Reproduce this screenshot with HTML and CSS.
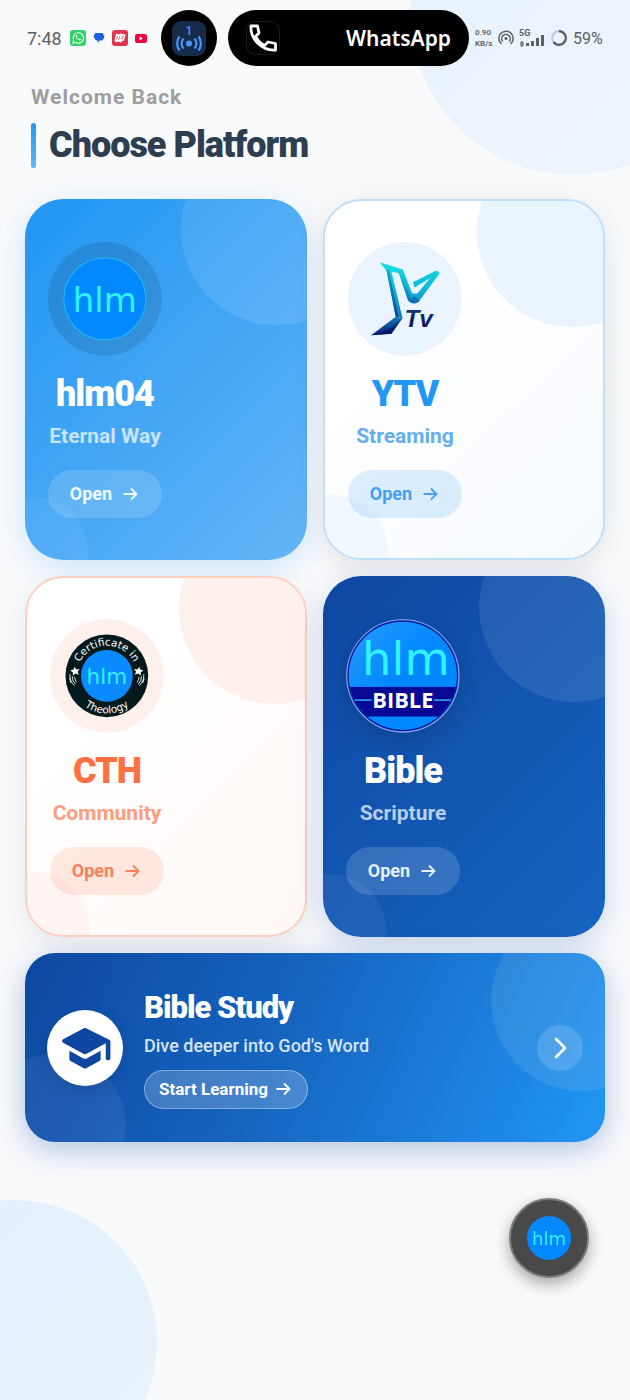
FILE: index.html
```html
<!DOCTYPE html>
<html lang="en">
<head>
    <meta charset="UTF-8">
    <meta name="viewport" content="width=device-width, initial-scale=1.0">
    <title>Choose Platform</title>
    <link rel="stylesheet" href="styles.css">
</head>
<body>
    <!-- shared icons -->
    <svg class="defs" width="0" height="0" aria-hidden="true">
        <symbol id="arrow" viewBox="0 0 20 20">
            <path d="M3.500 10h13M11 4.500l5.500 5.500-5.500 5.500" fill="none" stroke="currentColor" stroke-width="1.800"/>
        </symbol>
    </svg>

    <div class="page">
        <div class="status-bar">
            <span class="time">7:48</span>
            <div class="notifications">
                <svg width="16" height="16" viewBox="0 0 16 16">
                    <rect width="16" height="16" rx="3" fill="#2fd366"/>
                    <path d="M3 13l.8-2.600A5.200 5.200 0 1 1 5.700 12.400z" fill="none" stroke="#fff" stroke-width="1.100"/>
                    <path d="M6 5.200c-.6.600-.3 2 1.200 3.500s3 1.900 3.500 1.200l.2-.9-1.400-.7-.6.600c-.9-.3-1.600-1-1.900-1.900l.5-.6-.7-1.400z" fill="#fff"/>
                </svg>
                <svg width="12" height="12" viewBox="0 0 12 12">
                    <path d="M3 1h6q1.500 0 1.500 2 1.500 0 .8 1.500Q10.500 8.500 8 8.500H6.500L4.500 11V8.500Q2 8.500 1.500 6 0 5 1 3.500 1.500 1 3 1z" fill="#1a5fe0"/>
                </svg>
                <svg width="16" height="16" viewBox="0 0 16 16">
                    <rect width="16" height="16" rx="3" fill="#e1344d"/>
                    <path d="M4 3.500l3.500 1 1-1 5 1-1.500 6-2 .5-1 1.500-3-1-1.500 1L2.500 11z" fill="#fff"/>
                    <path d="M5.500 6L4.500 9.500M8 6L6.500 10M10 6h1.500L10.500 8.500H9" fill="none" stroke="#e1344d" stroke-width=".7"/>
                </svg>
                <svg width="12" height="9" viewBox="0 0 12 9">
                    <rect width="12" height="9" rx="2" fill="#f5003d"/>
                    <path d="M4.500 2.500v4l3.500-2z" fill="#fff"/>
                </svg>
            </div>
            <div class="hotspot">
                <svg width="34" height="35" viewBox="0 0 34 35">
                    <rect width="34" height="35" rx="9" fill="#162c4a"/>
                    <text x="17" y="14" class="hotspot-count">1</text>
                    <circle cx="17" cy="22.500" r="3" fill="#4c94f8"/>
                    <path d="M11.500 17.500a7.500 7.500 0 0 0 0 10M22.500 17.500a7.500 7.500 0 0 1 0 10M7.500 15.500a11.500 11.500 0 0 0 0 14M26.500 15.500a11.500 11.500 0 0 1 0 14" fill="none" stroke="#4c94f8" stroke-width="2.200"/>
                </svg>
            </div>
            <div class="call-pill">
                <svg width="34" height="34" viewBox="0 0 34 34">
                    <rect x=".5" y=".5" width="33" height="33" rx="9" fill="#000" stroke="#1c1c1c"/>
                    <path d="M5 5h6.500l1.500 7-3.500 3.500c2 4 4.800 6.800 9 9L22 21l7.500 1.500V29C16 30 4 18 5 5z" fill="none" stroke="#fff" stroke-width="2.800" stroke-linejoin="round"/>
                </svg>
                <span>WhatsApp</span>
            </div>
            <div class="signals">
                <span class="speed">0.90<br>KB/s</span>
                <svg width="16" height="16" viewBox="0 0 16 16">
                    <g fill="none" stroke="#5c6065" stroke-width="1.500">
                        <path d="M3.500 14A7.200 7.200 0 1 1 12.500 14"/>
                        <path d="M4.700 11.500a4.300 4.300 0 1 1 6.600 0"/>
                    </g>
                    <circle cx="8" cy="8.500" r="1.600" fill="#5c6065"/>
                </svg>
                <svg class="bars" width="26" height="18" viewBox="0 0 26 18">
                    <text x="0" y="7">5G</text>
                    <path d="M7 14h3v3H7zM12 12h3v5h-3zM17 9h3v8h-3zM22 6h3v11h-3z" fill="#5c6065"/>
                    <rect x="2" y="13" width="2" height="4" rx="1" fill="none" stroke="#5c6065" stroke-width="1.300"/>
                </svg>
                <svg width="18" height="18" viewBox="0 0 18 18">
                    <circle cx="9" cy="9" r="6.800" fill="none" stroke="#c3c9cf" stroke-width="2.200"/>
                    <path d="M9 2.200a6.800 6.800 0 1 1-5.500 10.800" fill="none" stroke="#5c6065" stroke-width="2.200"/>
                </svg>
                <span class="battery">59%</span>
            </div>
        </div>

        <header>
            <p class="welcome">Welcome Back</p>
            <h1>Choose Platform</h1>
        </header>

        <main class="platforms">
            <section class="card card-hlm">
                <svg class="logo" viewBox="0 0 339 339" role="img" aria-label="hlm04 logo">
                    <circle cx="169" cy="169" r="169" fill="#000" opacity=".11"/>
                    <circle cx="169" cy="169" r="122" fill="#0389ff" stroke="#22b8f5" stroke-width="3"/>
                    <text x="169" y="207" font-size="101" class="mark">hlm</text>
                </svg>
                <h2>hlm04</h2>
                <p>Eternal Way</p>
                <button type="button">Open <svg class="arrow"><use href="#arrow"/></svg></button>
            </section>

            <section class="card card-ytv">
                <svg class="logo" viewBox="0 0 339 339" role="img" aria-label="YTV logo">
                    <defs>
                        <linearGradient id="ytv" x1="0" y1="60" x2="0" y2="277" gradientUnits="userSpaceOnUse">
                            <stop offset="0" stop-color="#12e3e0"/>
                            <stop offset=".4" stop-color="#0fb0d8"/>
                            <stop offset=".75" stop-color="#1279bd"/>
                            <stop offset="1" stop-color="#0a1f7a"/>
                        </linearGradient>
                        <linearGradient id="ytv-dark" x1="0" y1="80" x2="0" y2="277" gradientUnits="userSpaceOnUse">
                            <stop offset="0" stop-color="#0fa9c9"/>
                            <stop offset=".5" stop-color="#0d65b0"/>
                            <stop offset="1" stop-color="#06115f"/>
                        </linearGradient>
                        <linearGradient id="ytv-text" x1="0" y1="0" x2="0" y2="1">
                            <stop offset="0" stop-color="#123c86"/>
                            <stop offset="1" stop-color="#06104f"/>
                        </linearGradient>
                    </defs>
                    <circle cx="169" cy="169" r="169" fill="#eaf4fe"/>
                    <path d="M94 60l69 22-8 12-28-6-13-3z" fill="url(#ytv)"/>
                    <path d="M114 82l15 6 33 138-20-4z" fill="url(#ytv)"/>
                    <path d="M114 82l8 3 28 138-8-1z" fill="url(#ytv-dark)"/>
                    <path d="M149 87l14-5 28 71 16 1v27q-22 4-29-9z" fill="url(#ytv)"/>
                    <path d="M151 90l27 82q4 6 10 8l-6-24z" fill="url(#ytv-dark)" opacity=".7"/>
                    <path d="M191 153q9 6 17-2l36-43-46 27-5-15 65-33q12-3 15 5l-60 82q-6 10-22 8z" fill="url(#ytv)"/>
                    <path d="M178 172l21-11 14 13q-5 9-18 8-12 0-17-10z" fill="url(#ytv-dark)" opacity=".8"/>
                    <path d="M142 222l20 4-33 47-60 4z" fill="url(#ytv)"/>
                    <path d="M162 226l-33 47-60 4 60-22z" fill="url(#ytv-dark)"/>
                    <text x="168" y="252" font-size="72" class="tv" fill="url(#ytv-text)">Tv</text>
                </svg>
                <h2>YTV</h2>
                <p>Streaming</p>
                <button type="button">Open <svg class="arrow"><use href="#arrow"/></svg></button>
            </section>

            <section class="card card-cth">
                <svg class="logo" viewBox="0 0 339 339" role="img" aria-label="Certificate in Theology logo">
                    <defs>
                        <path id="ring-top" d="M79 169a90 90 0 0 1 180 0"/>
                        <path id="ring-bottom" d="M57 169a112 112 0 0 0 224 0"/>
                    </defs>
                    <circle cx="169" cy="169" r="169" fill="#fff0ec"/>
                    <circle cx="169" cy="169" r="123" fill="#03191b"/>
                    <circle cx="169" cy="169" r="77" fill="#0a8bff"/>
                    <text x="169" y="193" font-size="64" class="mark">hlm</text>
                    <g class="ring">
                        <text><textPath href="#ring-top" startOffset="50%">Certificate in</textPath></text>
                        <text><textPath href="#ring-bottom" startOffset="50%">Theology</textPath></text>
                    </g>
                    <g fill="#fff">
                        <path d="M73 142l5 8 10-1-6 8 4 9-10-4-8 6v-10l-8-5 10-3z"/>
                        <path d="M265 142l-5 8-10-1 6 8-4 9 10-4 8 6v-10l8-5-10-3z"/>
                    </g>
                    <g fill="none" stroke="#fff" stroke-width="2.500">
                        <path d="M59 164q0 24 14 34M66 170q0 16 10 24M73 172q1 10 6 16M58 176l4 14"/>
                        <path d="M279 164q0 24-14 34M272 170q0 16-10 24M265 172q-1 10-6 16M280 176l-4 14"/>
                    </g>
                </svg>
                <h2>CTH</h2>
                <p>Community</p>
                <button type="button">Open <svg class="arrow"><use href="#arrow"/></svg></button>
            </section>

            <section class="card card-bible">
                <svg class="logo logo-shadow" viewBox="0 0 339 339" role="img" aria-label="hlm Bible logo">
                    <defs>
                        <clipPath id="disc"><circle cx="169" cy="169" r="161"/></clipPath>
                        <linearGradient id="sky" x1="0" y1="0" x2="1" y2="1">
                            <stop offset="0" stop-color="#2a9bff"/>
                            <stop offset=".5" stop-color="#0088ff"/>
                        </linearGradient>
                    </defs>
                    <circle cx="169" cy="169" r="167" fill="#0a1a9c" stroke="#7ea6ef" stroke-width="4"/>
                    <g clip-path="url(#disc)">
                        <rect width="339" height="339" fill="url(#sky)"/>
                        <rect y="202" width="339" height="88" fill="#080a96"/>
                    </g>
                    <path d="M26 241h50M262 241h50" stroke="#2a9bdc" stroke-width="5"/>
                    <text x="178" y="168" font-size="138" class="mark">hlm</text>
                    <text x="169" y="265" font-size="65" class="bible">BIBLE</text>
                </svg>
                <h2>Bible</h2>
                <p>Scripture</p>
                <button type="button">Open <svg class="arrow"><use href="#arrow"/></svg></button>
            </section>

            <section class="banner">
                <div class="banner-icon">
                    <svg width="56" height="56" viewBox="0 0 24 24" fill="#0d47a1">
                        <path d="M5.300 13.200v3.500c0 .4.200.7.500.9l5.500 3c.4.300 1 .3 1.400 0l5.500-3c.3-.2.500-.5.500-.9v-3.500l-6 3.300c-.4.200-1 .2-1.400 0zM11.300 3.600L2.600 8.300c-.6.300-.6 1.100 0 1.400l8.700 4.800c.4.200 1 .2 1.400 0l8.200-4.500v6.400c0 .5.400.9 1 .9s1-.4 1-.9V9.400c0-.4-.2-.7-.5-.9l-9.700-4.900c-.4-.2-1-.2-1.400 0z"/>
                    </svg>
                </div>
                <div class="banner-text">
                    <h2>Bible Study</h2>
                    <p>Dive deeper into God's Word</p>
                    <button type="button" class="start">Start Learning <svg class="arrow"><use href="#arrow"/></svg></button>
                </div>
                <button type="button" class="next" aria-label="Next">
                    <svg width="24" height="24" viewBox="0 0 24 24">
                        <path d="M8 3l9 9-9 9" fill="none" stroke="#fff" stroke-width="2.600" stroke-linecap="round" stroke-linejoin="round"/>
                    </svg>
                </button>
            </section>
        </main>

        <button type="button" class="fab" aria-label="hlm menu">
            <svg width="46" height="46" viewBox="0 0 46 46">
                <circle cx="23" cy="23" r="22" fill="#0389ff"/>
                <text x="23" y="30" font-size="18" class="mark">hlm</text>
            </svg>
        </button>
    </div>
</body>
</html>
```
FILE: styles.css
```css
* {
    box-sizing: border-box;
}
body {
    margin: 0;
    font-family: Roboto, "Liberation Sans", sans-serif;
    background-color: #f9fafc;
}
h1, h2, p {
    margin: 0;
}
button {
    border: none;
    padding: 0;
    font-family: inherit;
    cursor: pointer;
}
svg {
    display: block;
    flex-shrink: 0;
}
.defs {
    position: absolute;
}

/* big pale circles behind the page */
.page {
    position: relative;
    z-index: 0;
    min-height: 100vh;
    overflow: hidden;
}
.page::before, .page::after {
    content: "";
    position: absolute;
    z-index: -1;
    border-radius: 50%;
}
.page::before {
    width: 326px;
    height: 326px;
    top: -151px;
    right: -106px;
    background: linear-gradient(135deg, #e6f2fc, #eff5fe);
}
.page::after {
    width: 284px;
    height: 284px;
    left: -127px;
    bottom: -84px;
    background: linear-gradient(135deg, #e2f0fc, #e8f2fb);
}

/* status bar */
.status-bar {
    display: flex;
    align-items: center;
    height: 76px;
    padding: 0 27px;
    color: #5c6065;
}
.time {
    font-size: 18px;
    width: 43px;
}
.notifications {
    display: flex;
    align-items: center;
    gap: 7px;
    width: 91px;
}
.hotspot {
    display: flex;
    align-items: center;
    justify-content: center;
    width: 56px;
    height: 56px;
    border-radius: 50%;
    background: #000;
}
.hotspot-count {
    font-size: 12px;
    font-weight: 500;
    fill: #4c94f8;
    text-anchor: middle;
}
.call-pill {
    display: flex;
    flex: 1;
    align-items: center;
    justify-content: space-between;
    height: 56px;
    margin-left: 11px;
    padding: 0 18px;
    border-radius: 28px;
    background: #000;
    color: #fff;
    font-family: "Noto Sans", sans-serif;
    font-size: 21px;
    font-weight: 600;
}
.signals {
    display: flex;
    align-items: center;
    gap: 5px;
    margin-left: 6px;
}
.speed {
    font-size: 8px;
    font-weight: 600;
    line-height: 11px;
    width: 18px;
}
.bars text {
    font-size: 9px;
    font-weight: 700;
    fill: #5c6065;
}
.battery {
    font-size: 16px;
    width: 30px;
}

/* heading */
header {
    padding: 8px 31px 31px;
}
.welcome {
    font-size: 21px;
    font-weight: 700;
    line-height: 26px;
    letter-spacing: 1px;
    color: #9e9e9e;
}
h1 {
    display: flex;
    align-items: center;
    gap: 13px;
    margin-top: 13px;
    font-size: 36px;
    font-weight: 900;
    line-height: 45px;
    letter-spacing: -1px;
    color: #2c3e50;
}
h1::before {
    content: "";
    width: 5px;
    height: 45px;
    border-radius: 3px;
    background: linear-gradient(#2196f3, #64b5f6);
}

/* platform cards */
.platforms {
    display: grid;
    grid-template-columns: 1fr 1fr;
    gap: 16px;
    padding: 0 25px;
}
.card {
    position: relative;
    z-index: 0;
    display: flex;
    flex-direction: column;
    align-items: flex-start;
    justify-content: center;
    min-height: 361px;
    padding: 23px;
    border-radius: 38px;
    overflow: hidden;
}
.card::before, .card::after, .banner::before, .banner::after {
    content: "";
    position: absolute;
    z-index: -1;
    border-radius: 50%;
    background: var(--bubble);
}
.card::before {
    width: 190px;
    height: 190px;
    top: -64px;
    right: -64px;
}
.card::after {
    width: 112px;
    height: 112px;
    left: -49px;
    bottom: -49px;
    opacity: 0.6;
}
.logo {
    width: 114px;
    height: 114px;
    margin-bottom: 18px;
}
.logo-shadow {
    border-radius: 50%;
    box-shadow: 0 8px 20px rgba(0, 0, 0, 0.15);
}
.card h2 {
    width: 114px;
    margin-bottom: 8px;
    font-size: 36px;
    font-weight: 900;
    line-height: 40px;
    letter-spacing: -1px;
    text-align: center;
}
.card p {
    min-width: 114px;
    margin-bottom: 20px;
    font-size: 21px;
    font-weight: 700;
    line-height: 28px;
    text-align: center;
}
.card button {
    display: flex;
    align-items: center;
    justify-content: center;
    gap: 8px;
    width: 114px;
    height: 48px;
    border-radius: 24px;
    font-size: 18px;
    font-weight: 700;
}
.arrow {
    width: 20px;
    height: 20px;
}

.card-hlm {
    --bubble: rgba(255, 255, 255, 0.1);
    background: linear-gradient(135deg, #2196f3, #64b5f6);
    box-shadow: 0 8px 30px rgba(33, 150, 243, 0.2);
    color: #fff;
}
.card-hlm p {
    color: #c8e4fc;
}
.card-hlm button {
    background: rgba(255, 255, 255, 0.15);
    color: #f2f9ff;
}
.card-ytv {
    --bubble: #e9f4fe;
    border: 2px solid #bfdff9;
    background: linear-gradient(135deg, #fff 30%, #f6faff);
    box-shadow: 0 8px 30px rgba(0, 0, 0, 0.1);
    color: #2196f3;
}
.card-ytv p {
    color: #64aeee;
}
.card-ytv button {
    background: rgba(33, 150, 243, 0.15);
    color: #42a0f0;
}
.card-cth {
    --bubble: #fff0ec;
    border: 2px solid #ffcfc0;
    background: linear-gradient(135deg, #fff 30%, #fff8f5);
    box-shadow: 0 8px 30px rgba(0, 0, 0, 0.08);
    color: #ff7043;
}
.card-cth p {
    color: #ff9c7d;
}
.card-cth button {
    background: rgba(255, 112, 67, 0.15);
    color: #fa8059;
}
.card-bible {
    --bubble: rgba(255, 255, 255, 0.09);
    background: linear-gradient(135deg, #0d47a1, #1565c0);
    box-shadow: 0 8px 30px rgba(13, 71, 161, 0.2);
    color: #fff;
}
.card-bible p {
    color: #b7cdec;
}
.card-bible button {
    background: rgba(255, 255, 255, 0.15);
    color: #e6effa;
}

/* lettering inside the logos */
.mark {
    font-family: "DejaVu Sans", sans-serif;
    font-weight: 400;
    fill: #2ff3fb;
    text-anchor: middle;
}
.tv {
    font-family: "Liberation Sans", sans-serif;
    font-weight: 700;
    font-style: italic;
}
.bible {
    font-family: "Open Sans", sans-serif;
    font-weight: 700;
    fill: #fff;
    text-anchor: middle;
}
.ring {
    font-family: "DejaVu Sans", sans-serif;
    font-size: 31px;
    fill: #fff;
    text-anchor: middle;
}

/* bible study banner */
.banner {
    --bubble: rgba(255, 255, 255, 0.09);
    grid-column: 1 / -1;
    position: relative;
    z-index: 0;
    display: flex;
    align-items: center;
    gap: 21px;
    min-height: 189px;
    padding: 22px;
    border-radius: 30px;
    overflow: hidden;
    background: linear-gradient(115deg, #0d47a1, #1565c0 45%, #2196f3);
    box-shadow: 0 8px 30px rgba(13, 71, 161, 0.3);
    color: #fff;
}
.banner::before {
    width: 180px;
    height: 180px;
    top: -42px;
    right: -66px;
}
.banner::after {
    width: 144px;
    height: 144px;
    left: -43px;
    bottom: -56px;
    opacity: 0.7;
}
.banner-icon {
    display: flex;
    align-items: center;
    justify-content: center;
    width: 76px;
    height: 76px;
    border-radius: 50%;
    background: #fff;
    box-shadow: 0 6px 16px rgba(0, 0, 0, 0.12);
}
.banner-text {
    flex: 1;
    padding-top: 3px;
}
.banner h2 {
    font-size: 31px;
    font-weight: 900;
    line-height: 36px;
    letter-spacing: -1px;
}
.banner p {
    margin: 8px 0 12px;
    font-size: 18px;
    font-weight: 500;
    line-height: 24px;
    color: #d5e5f8;
}
.start {
    display: flex;
    align-items: center;
    gap: 5px;
    height: 39px;
    padding: 0 14px;
    border: 1px solid rgba(255, 255, 255, 0.35);
    border-radius: 20px;
    background: rgba(255, 255, 255, 0.2);
    color: #fff;
    font-size: 17px;
    font-weight: 700;
}
.next {
    display: flex;
    align-items: center;
    justify-content: center;
    width: 46px;
    height: 46px;
    border-radius: 50%;
    background: rgba(255, 255, 255, 0.15);
}

/* floating button */
.fab {
    position: fixed;
    right: 41px;
    bottom: 122px;
    display: flex;
    align-items: center;
    justify-content: center;
    width: 80px;
    height: 80px;
    border: 2px solid #7b7b7b;
    border-radius: 50%;
    background: #484a4a;
    box-shadow: 0 6px 16px rgba(0, 0, 0, 0.35);
}
```
